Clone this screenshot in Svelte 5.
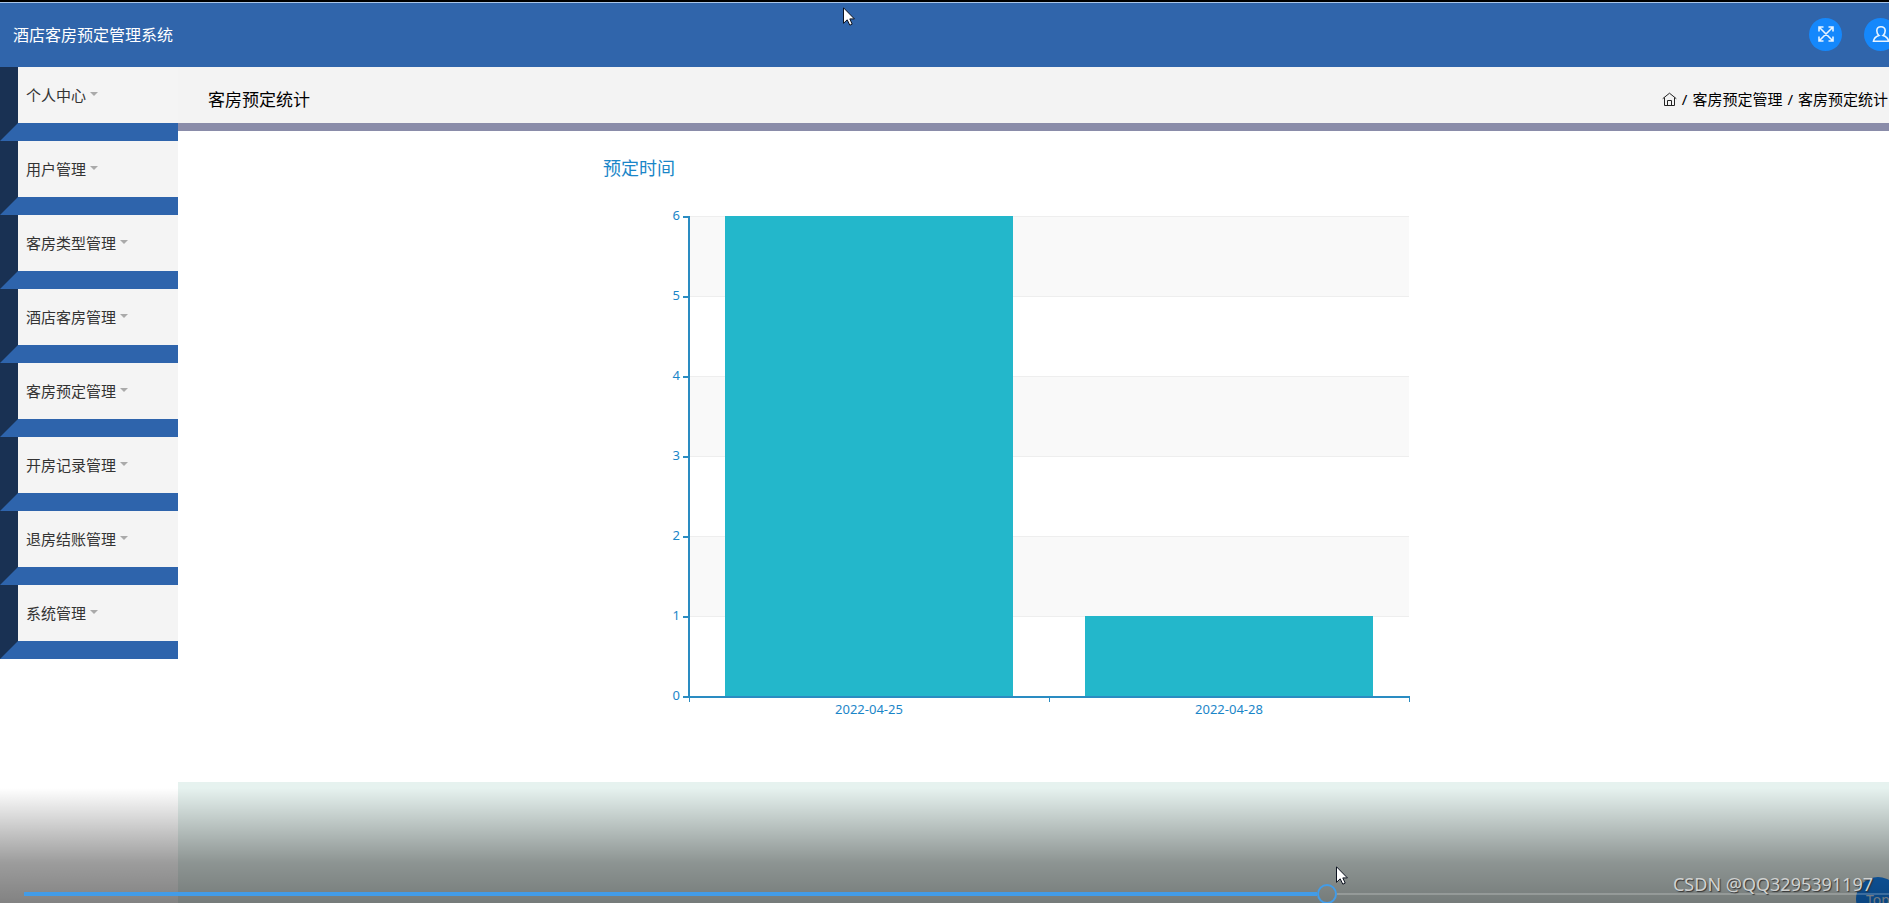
<script>
  const menu = [
    '个人中心', '用户管理', '客房类型管理', '酒店客房管理',
    '客房预定管理', '开房记录管理', '退房结账管理', '系统管理'
  ];
  const bookings = [
    { date: '2022-04-25', count: 6 },
    { date: '2022-04-28', count: 1 }
  ];

  // Plot area inside the 900 x 600 chart canvas
  const plot = { left: 90, top: 60, width: 720, height: 480 };
  const max = 6;
  const unit = plot.height / max;
  const band = plot.width / bookings.length;
  const base = plot.top + plot.height;
  const ticks = [0, 1, 2, 3, 4, 5, 6];
</script>

{#snippet pointer()}
  <svg width="12" height="19" viewBox="0 0 12 19" aria-hidden="true">
    <path d="M.5 .8V16.3L4.2 12.8L6.8 18.2L9.2 17.1L6.8 11.9H11.4Z" fill="#fff" stroke="#0d1320" />
  </svg>
{/snippet}

<div class="screen">
  <div class="page">
    <header class="topbar">
      <h1>酒店客房预定管理系统</h1>
      <div class="actions">
        <button aria-label="全屏">
          <svg width="18" height="18" viewBox="0 0 18 18">
            <path d="M2 6.500V2H6.500M11.500 2H16V6.500M16 11.500V16H11.500M6.500 16H2V11.500M2 2L16 16M16 2L2 16" />
          </svg>
        </button>
        <button aria-label="个人中心">
          <svg width="18" height="18" viewBox="0 0 18 18">
            <path d="M7 10.5C3.5 11.5 2 13 1.500 16.2H16.5C16 13 14.500 11.500 11 10.500C12.500 9.300 13.200 7.600 13.200 5.800C13.200 3.200 11.500 1.700 9 1.700S4.800 3.200 4.800 5.800C4.800 7.600 5.500 9.300 7 10.500Z" />
          </svg>
        </button>
      </div>
    </header>

    <div class="body">
      <nav>
        {#each menu as item}
          <button class="item">{item}<i class="caret"></i></button>
        {/each}
      </nav>

      <main>
        <div class="heading">
          <h2>客房预定统计</h2>
          <div class="crumbs">
            <a href="#home" aria-label="首页">
              <svg width="15" height="15" viewBox="0 0 15 15" fill="none" stroke="#222">
                <path d="M.7 6.700L7.500 1.200L14.300 6.700M2.500 5.500V13.500H12.500V5.500M5.500 13.500V8.500H9.500V13.500" />
              </svg>
            </a>
            <span>/</span>
            <a href="#booking">客房预定管理</a>
            <span>/</span>
            <span>客房预定统计</span>
          </div>
        </div>

        <section class="panel">
          <svg class="chart" viewBox="0 0 900 600" role="img" aria-label="预定时间">
            <text class="title" x="4" y="19">预定时间</text>
            {#each [1, 3, 5] as row}
              <rect x={plot.left} y={base - (row + 1) * unit} width={plot.width} height={unit} fill="#f9f9f9" />
            {/each}
            {#each ticks.slice(1) as t}
              <rect x={plot.left} y={base - t * unit} width={plot.width} height="1" fill="#eee" />
            {/each}
            {#each bookings as b, i}
              <rect
                x={plot.left + band * (i + 0.1)} y={base - b.count * unit}
                width={band * 0.8} height={b.count * unit} fill="#23b7cb" />
              <text class="label" x={plot.left + band * (i + 0.5)} y={base + 18} text-anchor="middle">{b.date}</text>
            {/each}
            <g fill="#2a8cc2">
              <rect x={plot.left - 1} y={plot.top} width="2" height={plot.height + 1} />
              <rect x={plot.left - 1} y={base} width={plot.width + 2} height="2" />
              {#each ticks as t}
                <rect x={plot.left - 6} y={base - t * unit} width="5" height="2" />
              {/each}
              {#each [0, 1, 2] as t}
                <rect x={plot.left + band * t} y={base} width="1" height="6" />
              {/each}
            </g>
            {#each ticks as t}
              <text class="label" x={plot.left - 9} y={base - t * unit + 4} text-anchor="end">{t}</text>
            {/each}
          </svg>
        </section>
        <div class="filler"></div>
      </main>
    </div>
  </div>

  <button class="top">Top</button>
  <div class="pointer first">{@render pointer()}</div>

  <div class="player">
    <div class="track">
      <div class="played"></div>
      <div class="knob"></div>
      <div class="rest"></div>
    </div>
  </div>
  <div class="pointer second">{@render pointer()}</div>
  <div class="mark">CSDN @QQ3295391197</div>
</div>

<style>
  :global(body) {
    margin: 0;
  }
  .screen {
    position: relative;
    box-sizing: border-box;
    min-height: 100vh;
    display: flex;
    flex-direction: column;
    overflow: hidden;
    border-top: 2px solid #000;
    font-family: "Noto Sans", "Noto Sans CJK SC", sans-serif;
    background: #fff;
  }
  button {
    border: 0;
    padding: 0;
    font: inherit;
  }
  h1, h2 {
    margin: 0;
    font-weight: 400;
  }
  /* The page is a little wider than the visible screen */
  .page {
    flex: 1;
    display: flex;
    flex-direction: column;
    margin-right: -31px;
  }
  .topbar {
    box-sizing: border-box;
    height: 65px;
    padding: 0 23px 2px 13px;
    display: flex;
    align-items: center;
    justify-content: space-between;
    background: #3065ab;
    border-top: 1px solid #a9c6ea;
    color: #fff;
  }
  h1 {
    font-size: 16px;
    line-height: 24px;
    padding-top: 2px;
  }
  .actions {
    display: flex;
    gap: 22px;
  }
  .actions button {
    width: 33px;
    height: 33px;
    border-radius: 50%;
    background: #1588fc;
    display: grid;
    place-items: center;
  }
  .actions path {
    fill: none;
    stroke: #e8f4ff;
    stroke-width: 1.6;
  }
  .body {
    flex: 1;
    display: flex;
  }
  nav {
    width: 178px;
    flex: none;
    display: flex;
    flex-direction: column;
  }
  .item {
    display: flex;
    align-items: center;
    gap: 4px;
    height: 74px;
    box-sizing: border-box;
    padding: 0 0 2px 8px;
    border-left: 18px solid #193153;
    border-bottom: 18px solid #2e64ac;
    background: #f4f4f4;
    color: #333;
    font-size: 15px;
  }
  .caret {
    border: 4px solid transparent;
    border-top-color: #aaa;
    border-bottom: 0;
  }
  main {
    flex: 1;
    display: flex;
    flex-direction: column;
  }
  .heading {
    height: 56px;
    display: flex;
    align-items: center;
    justify-content: space-between;
    padding: 0 32px 0 30px;
    background: #f3f3f3;
    border-bottom: 8px solid #8a8ca9;
    color: #000;
  }
  h2 {
    font-size: 17px;
    line-height: 24px;
    padding-top: 10px;
  }
  .crumbs {
    display: flex;
    align-items: center;
    gap: 5px;
    padding-top: 8px;
    font-size: 15px;
    line-height: 24px;
  }
  .crumbs a {
    color: inherit;
    text-decoration: none;
  }
  .crumbs svg {
    display: block;
  }
  .panel {
    display: flex;
    justify-content: center;
    padding: 25px 0 26px;
  }
  .chart {
    width: 900px;
    height: 600px;
  }
  .title {
    font-size: 18px;
    fill: #1a86c8;
  }
  .label {
    font-size: 13px;
    fill: #1a86c8;
  }
  .filler {
    flex: 1;
    background: #e6f2ef;
  }
  .top {
    position: absolute;
    right: -11px;
    bottom: -18px;
    width: 44px;
    height: 44px;
    border-radius: 50%;
    background: #1588fc;
    color: #dceafa;
    font-size: 14px;
  }
  .pointer {
    position: absolute;
  }
  .pointer svg {
    display: block;
  }
  .first {
    left: 843px;
    top: 5px;
  }
  .second {
    left: 1336px;
    bottom: 18px;
  }
  .player {
    position: absolute;
    left: 0;
    right: 0;
    bottom: 0;
    height: 115px;
    display: flex;
    align-items: flex-end;
    background: linear-gradient(transparent, rgba(0, 0, 0, 0.39) 65%, rgba(0, 0, 0, 0.49));
  }
  .track {
    flex: 1;
    display: flex;
    align-items: center;
    height: 18px;
    padding-left: 24px;
  }
  .played {
    width: 1293px;
    height: 4px;
    background: #429ce8;
  }
  .knob {
    width: 16px;
    height: 16px;
    border: 2px solid #429ce8;
    border-radius: 50%;
  }
  .rest {
    flex: 1;
    height: 2px;
    background: rgba(255, 255, 255, 0.2);
  }
  .mark {
    position: absolute;
    right: 16px;
    bottom: 7px;
    font-size: 18px;
    line-height: 24px;
    color: #d0d2d1;
    text-shadow: 1px 1px 1px #333;
  }
</style>
